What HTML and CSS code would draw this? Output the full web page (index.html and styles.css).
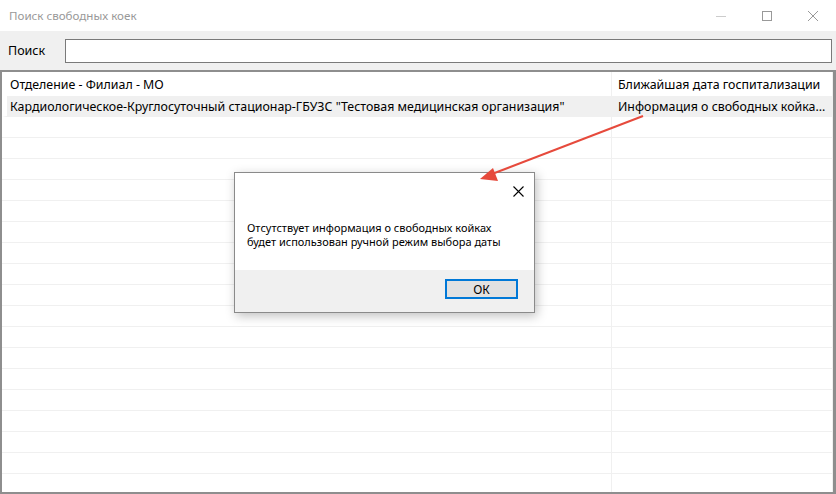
FILE: index.html
```html
<!DOCTYPE html>
<html lang="ru">
<head>
    <meta charset="UTF-8">
    <meta name="viewport" content="width=device-width, initial-scale=1.0">
    <title>Поиск свободных коек</title>
    <link rel="stylesheet" href="styles.css">
</head>
<body>
    <div class="window">
        <div class="titlebar">
            <div class="title">Поиск свободных коек</div>
            <div class="controls">
                <div class="ctl"><svg width="10" height="10" viewBox="0 0 10 10"><path d="M0 5.5h10" stroke="#cccccc" stroke-width="1"/></svg></div>
                <div class="ctl"><svg width="10" height="10" viewBox="0 0 10 10"><rect x="0.5" y="0.5" width="9" height="9" fill="none" stroke="#999999" stroke-width="1"/></svg></div>
                <div class="ctl"><svg width="10" height="10" viewBox="0 0 10 10"><path d="M0 0L10 10M10 0L0 10" stroke="#999999" stroke-width="1"/></svg></div>
            </div>
        </div>

        <div class="toolbar">
            <label class="search-label">Поиск</label>
            <input class="search-input" type="text">
        </div>

        <div class="grid">
            <div class="row head">
                <div class="cell">Отделение - Филиал - МО</div>
                <div class="cell">Ближайшая дата госпитализации</div>
            </div>
            <div class="row sel">
                <div class="cell">Кардиологическое-Круглосуточный стационар-ГБУЗС "Тестовая медицинская организация"</div>
                <div class="cell">Информация о свободных койка...</div>
            </div>
            <div class="row"><div class="cell"></div><div class="cell"></div></div>
            <div class="row"><div class="cell"></div><div class="cell"></div></div>
            <div class="row"><div class="cell"></div><div class="cell"></div></div>
            <div class="row"><div class="cell"></div><div class="cell"></div></div>
            <div class="row"><div class="cell"></div><div class="cell"></div></div>
            <div class="row"><div class="cell"></div><div class="cell"></div></div>
            <div class="row"><div class="cell"></div><div class="cell"></div></div>
            <div class="row"><div class="cell"></div><div class="cell"></div></div>
            <div class="row"><div class="cell"></div><div class="cell"></div></div>
            <div class="row"><div class="cell"></div><div class="cell"></div></div>
            <div class="row"><div class="cell"></div><div class="cell"></div></div>
            <div class="row"><div class="cell"></div><div class="cell"></div></div>
            <div class="row"><div class="cell"></div><div class="cell"></div></div>
            <div class="row"><div class="cell"></div><div class="cell"></div></div>
            <div class="row"><div class="cell"></div><div class="cell"></div></div>
            <div class="row"><div class="cell"></div><div class="cell"></div></div>
            <div class="row"><div class="cell"></div><div class="cell"></div></div>
            <div class="row"><div class="cell"></div><div class="cell"></div></div>
        </div>
    </div>

    <div class="dialog">
        <div class="dialog-body">
            <div class="dialog-close"><svg width="11" height="11" viewBox="0 0 11 11"><path d="M0.5 0.5L10.5 10.5M10.5 0.5L0.5 10.5" stroke="#000" stroke-width="1.1"/></svg></div>
            <p class="dialog-text">Отсутствует информация о свободных койках<br>будет использован ручной режим выбора даты</p>
        </div>
        <div class="dialog-foot">
            <button class="btn-ok">ОК</button>
        </div>
    </div>

    <svg class="arrow" width="836" height="494" viewBox="0 0 836 494">
        <line x1="643" y1="116" x2="492" y2="174" stroke="#e64a3c" stroke-width="2"/>
        <polygon points="480,179 493,168 498,181" fill="#e64a3c"/>
    </svg>
</body>
</html>
```

FILE: styles.css
```css
*{
    margin: 0px;
    padding: 0px;
    box-sizing: border-box;
}

body{
    width: 836px;
    height: 494px;
    overflow: hidden;
    font-family: "Noto Sans", "Open Sans", sans-serif;
    background-color: white;
    position: relative;
}

.window{
    width: 836px;
    height: 494px;
    display: flex;
    flex-direction: column;
}

.titlebar{
    height: 31px;
    display: flex;
    align-items: center;
    justify-content: space-between;
    background-color: white;
}

.title{
    padding-left: 9px;
    font-size: 11.6px;
    color: #999999;
}

.controls{
    display: flex;
    height: 31px;
}

.ctl{
    width: 46px;
    display: flex;
    align-items: center;
    justify-content: center;
}

.toolbar{
    height: 39px;
    background-color: #f0f0f0;
    display: flex;
    align-items: center;
    padding: 0 4px 0 8px;
}

.search-label{
    font-size: 12.5px;
    width: 57px;
    color: black;
}

.search-input{
    flex: 1;
    height: 24px;
    border: 1px solid #7a7a7a;
    background-color: white;
    outline: none;
}

.grid{
    flex: 1;
    border: 2px solid #8e8e8e;
    border-right-width: 3px;
    background-color: white;
    overflow: hidden;
}

.row{
    display: grid;
    grid-template-columns: 610px 1fr;
    height: 21px;
    border-bottom: 1px solid #f0f0f0;
    font-size: 12.4px;
    white-space: nowrap;
}

.row.head{
    height: 24px;
    border-bottom: none;
}

.row.sel{
    background-color: #f0f0f0;
    border-left: 5px solid white;
    grid-template-columns: 605px 1fr;
}

.cell{
    display: flex;
    align-items: center;
    padding-left: 6px;
    overflow: hidden;
}

.cell:first-child{
    border-right: 1px solid #f0f0f0;
    padding-left: 8px;
}

.row.sel .cell:first-child{
    padding-left: 3px;
}

.cell:last-child{
    border-right: 1px solid #f0f0f0;
}

.dialog{
    position: absolute;
    left: 234px;
    top: 172px;
    width: 301px;
    height: 141px;
    border: 1px solid #8a8a8a;
    background-color: white;
    box-shadow: 2px 3px 10px rgba(0, 0, 0, 0.25);
    display: flex;
    flex-direction: column;
}

.dialog-body{
    flex: 1;
    position: relative;
    padding: 48px 12px 0 12px;
}

.dialog-close{
    position: absolute;
    right: 10px;
    top: 7px;
}

.dialog-text{
    font-size: 11px;
    line-height: 14px;
    color: black;
}

.dialog-foot{
    height: 42px;
    background-color: #f0f0f0;
    display: flex;
    justify-content: flex-end;
    align-items: flex-start;
    padding: 9px 16px 0 0;
}

.btn-ok{
    width: 73px;
    height: 20px;
    border: 2px solid #0078d7;
    background-color: #e1e1e1;
    font-family: "Noto Sans", "Open Sans", sans-serif;
    font-size: 12px;
    color: black;
}

.arrow{
    position: absolute;
    left: 0;
    top: 0;
    pointer-events: none;
}
```
